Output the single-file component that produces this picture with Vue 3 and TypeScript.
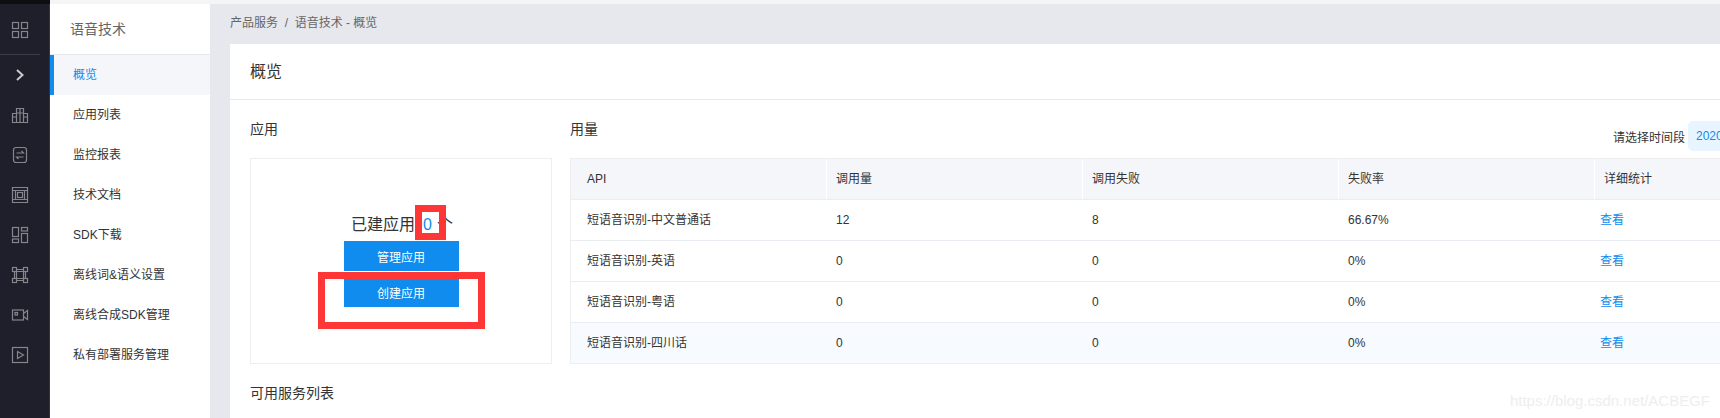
<script setup lang="ts">
const navItems: string[] = ['概览', '应用列表', '监控报表', '技术文档', 'SDK下载', '离线词&语义设置', '离线合成SDK管理', '私有部署服务管理']
const columns: string[] = ['API', '调用量', '调用失败', '失败率', '详细统计']
interface Row { name: string; calls: string; fails: string; rate: string }
const rows: Row[] = [
  { name: '短语音识别-中文普通话', calls: '12', fails: '8', rate: '66.67%' },
  { name: '短语音识别-英语', calls: '0', fails: '0', rate: '0%' },
  { name: '短语音识别-粤语', calls: '0', fails: '0', rate: '0%' },
  { name: '短语音识别-四川话', calls: '0', fails: '0', rate: '0%' }
]
</script>

<template>
  <div class="page">
    <div class="topstrip"><div class="topstrip-rail"></div></div>
    <div class="shell">
      <aside class="rail">
        <div class="rail-head">
          <svg class="ico" viewBox="0 0 18 18"><rect x="1.5" y="1.5" width="6" height="6" /><rect x="10.5" y="1.5" width="6" height="6" /><rect x="1.5" y="10.5" width="6" height="6" /><rect x="10.5" y="10.5" width="6" height="6" /></svg>
        </div>
        <div class="rail-item">
          <svg class="ico chev" viewBox="0 0 18 18"><path d="M6 4l5.5 5L6 14" /></svg>
        </div>
        <div class="rail-item">
          <svg class="ico" viewBox="0 0 18 18"><path d="M1.5 16.5V7.5H5.5V16.5ZM5.5 16.5V2.5H12.5V16.5ZM12.5 16.5V7.5H16.5V16.5ZM9 2.5V16.5M5.5 7H12.5M1.5 11H5.5M12.5 11H16.5" /></svg>
        </div>
        <div class="rail-item">
          <svg class="ico" viewBox="0 0 18 18"><rect x="2.5" y="1.5" width="13" height="15" rx="2.5" /><path d="M5.5 7H12.5L10.5 5M12.5 11H5.5L7.5 13" /></svg>
        </div>
        <div class="rail-item">
          <svg class="ico" viewBox="0 0 18 18"><path d="M1.5 1.5H16.5V16.5H1.5ZM1.5 4.5H4.5V13.5H1.5M16.5 4.5H13.5V13.5H16.5" /><rect x="6.5" y="6.5" width="5" height="5" /><path d="M4.5 4.5H13.5M4.5 13.5H13.5" /></svg>
        </div>
        <div class="rail-item">
          <svg class="ico" viewBox="0 0 18 18"><rect x="1.5" y="1.5" width="6" height="9" /><rect x="1.5" y="13" width="6" height="3.5" /><rect x="10.5" y="1.5" width="6" height="3.5" /><rect x="10.5" y="7.5" width="6" height="9" /></svg>
        </div>
        <div class="rail-item">
          <svg class="ico" viewBox="0 0 18 18"><rect x="1.5" y="1.5" width="4" height="4" /><rect x="12.5" y="1.5" width="4" height="4" /><rect x="1.5" y="12.5" width="4" height="4" /><rect x="12.5" y="12.5" width="4" height="4" /><path d="M5.5 5.5H12.5V12.5H5.5ZM5.5 3.5H12.5M5.5 14.5H12.5M3.5 5.5V12.5M14.5 5.5V12.5" /></svg>
        </div>
        <div class="rail-item">
          <svg class="ico" viewBox="0 0 18 18"><rect x="1.5" y="4" width="11" height="10" /><path d="M12.5 7.5L16.5 4.5V13.5L12.5 10.5" /><rect x="4" y="6.5" width="2.5" height="2.5" /></svg>
        </div>
        <div class="rail-item">
          <svg class="ico" viewBox="0 0 18 18"><rect x="1.5" y="1.5" width="15" height="15" /><path d="M6.5 5.5L12.5 9L6.5 12.5Z" /></svg>
        </div>
      </aside>

      <nav class="side">
        <div class="side-title">语音技术</div>
        <a v-for="(item, i) in navItems" :key="item" class="side-item" :class="{ active: i === 0 }">{{ item }}</a>
      </nav>

      <main class="main">
        <div class="crumb">产品服务 &nbsp;/&nbsp; 语音技术 - 概览</div>
        <section class="card">
          <header class="card-head">概览</header>
          <div class="card-body">
            <div class="panels">
              <div class="apps">
                <h3 class="sec-title apps-title">应用</h3>
                <div class="apps-box">
                  <div class="count">已建应用<span class="num">0</span>个</div>
                  <button class="btn">管理应用</button>
                  <button class="btn second">创建应用</button>
                  <i class="mark mark-num"></i>
                  <i class="mark mark-btn"></i>
                </div>
              </div>
              <div class="usage">
                <div class="usage-head">
                  <h3 class="sec-title usage-title">用量</h3>
                  <div class="range">
                    <span class="range-label">请选择时间段</span>
                    <span class="range-box">2020-01-01 ~ 2020-12-31</span>
                  </div>
                </div>
                <div class="table">
                  <div class="tr th">
                    <div v-for="c in columns" :key="c" class="td">{{ c }}</div>
                  </div>
                  <div v-for="r in rows" :key="r.name" class="tr">
                    <div class="td">{{ r.name }}</div>
                    <div class="td">{{ r.calls }}</div>
                    <div class="td">{{ r.fails }}</div>
                    <div class="td">{{ r.rate }}</div>
                    <div class="td"><a class="link">查看</a></div>
                  </div>
                </div>
              </div>
            </div>
            <h3 class="sec-title services">可用服务列表</h3>
          </div>
        </section>
      </main>
    </div>
    <div class="watermark">https://blog.csdn.net/ACBEGF</div>
  </div>
</template>

<style>
html, body { margin: 0; overflow: hidden; background: #fff; }
</style>

<style scoped>
.page {
  position: relative;
  width: 1720px;
  height: 418px;
  overflow: hidden;
  font-family: "Liberation Sans", "Noto Sans CJK SC", sans-serif;
  color: #333;
  font-size: 12px;
}
.topstrip { height: 4px; background: #f5f5f7; }
.topstrip-rail { width: 50px; height: 4px; background: #0e0e11; }
.shell { display: flex; height: 414px; }

.rail { width: 49px; flex: none; background: #1e1f2b; border-right: 1px solid #33343f; }
.rail-head { height: 50px; margin-right: 9px; border-bottom: 1px solid #3b3c47; display: flex; align-items: center; justify-content: center; }
.rail-item { height: 40px; margin-right: 9px; display: flex; align-items: center; justify-content: center; }
.rail-head .ico { margin-top: 1px; }
.ico { width: 18px; height: 18px; fill: none; stroke: #85868c; stroke-width: 1.2; }
.chev { stroke: #c9cacd; stroke-width: 2; }

.side { width: 160px; flex: none; background: #fff; }
.side-title { height: 50px; line-height: 50px; padding-left: 20px; font-size: 14px; color: #666; border-bottom: 1px solid #e8e9ee; }
.side-item { display: block; height: 40px; line-height: 40px; padding-left: 23px; }
.side-item.active { background: #f5f6fa; color: #108cee; padding-left: 19px; border-left: 4px solid #108cee; }

.main { flex: 1; min-width: 0; background: #e6e8ed; padding: 0 20px; overflow: hidden; }
.crumb { height: 40px; line-height: 38px; color: #666; white-space: nowrap; }
.card { width: 1640px; height: 400px; background: #fff; }
.card-head { height: 55px; line-height: 56px; padding-left: 20px; font-size: 16px; border-bottom: 1px solid #e8e9ee; }
.card-body { padding: 20px; }
.panels { display: flex; gap: 18px; }
.sec-title { margin: 0; font-size: 14px; font-weight: 400; line-height: 20px; color: #333; }
.apps-title { margin-top: -1px; }

.apps { width: 302px; flex: none; }
.apps-box {
  position: relative;
  box-sizing: border-box;
  height: 206px;
  margin-top: 19px;
  border: 1px solid #eee;
  display: flex;
  flex-direction: column;
  align-items: center;
  padding-top: 52px;
}
.count { font-size: 16px; line-height: 28px; height: 30px; color: #333; margin-left: 2px; white-space: nowrap; }
.num { color: #108cee; font-size: 16px; margin: 0 5px 0 8px; }
.btn {
  width: 115px;
  height: 30px;
  border: 0;
  padding: 0;
  background: #108cee;
  color: #fff;
  font: inherit;
  font-size: 12px;
}
.btn.second { margin-top: 6px; }
.mark { position: absolute; box-sizing: border-box; border: 7px solid #ff3636; background: transparent; }
.mark-num { left: 164px; top: 46px; width: 31px; height: 35px; }
.mark-btn { left: 67px; top: 113px; width: 167px; height: 57px; }

.usage { width: 1280px; flex: none; }
.usage-head { height: 38px; display: flex; justify-content: space-between; }
.usage-title { margin-top: -1px; }
.range { display: flex; align-items: center; height: 30px; margin-top: 1px; margin-left: auto; }
.range-label { width: 75px; color: #333; }
.range-box {
  width: 162px;
  height: 30px;
  line-height: 30px;
  padding-left: 8px;
  box-sizing: border-box;
  background: #e8f4ff;
  border-radius: 5px 0 0 5px;
  color: #108cee;
  white-space: nowrap;
  overflow: hidden;
}
.table { border: 1px solid #eee; border-right: 0; box-sizing: border-box; height: 206px; }
.tr { display: grid; grid-template-columns: 255px repeat(4, 256px); height: 41px; line-height: 40px; border-bottom: 1px solid #ebedf5; box-sizing: border-box; }
.tr:last-child { background: #f7fbff; border-bottom: 0; height: 40px; }
.td { padding-left: 10px; }
.td:first-child { padding-left: 16px; }
.tr:not(.th) .td:last-child { padding-left: 6px; }
.th { background: #f5f6fa; }
.th .td + .td { border-left: 1px solid #fff; padding-left: 9px; }
.link { color: #108cee; }
.services { margin-top: 19px; }

.watermark {
  position: absolute;
  right: 10px;
  bottom: 7px;
  font-size: 15px;
  line-height: 20px;
  color: #eeeeee;
  white-space: nowrap;
}
</style>
